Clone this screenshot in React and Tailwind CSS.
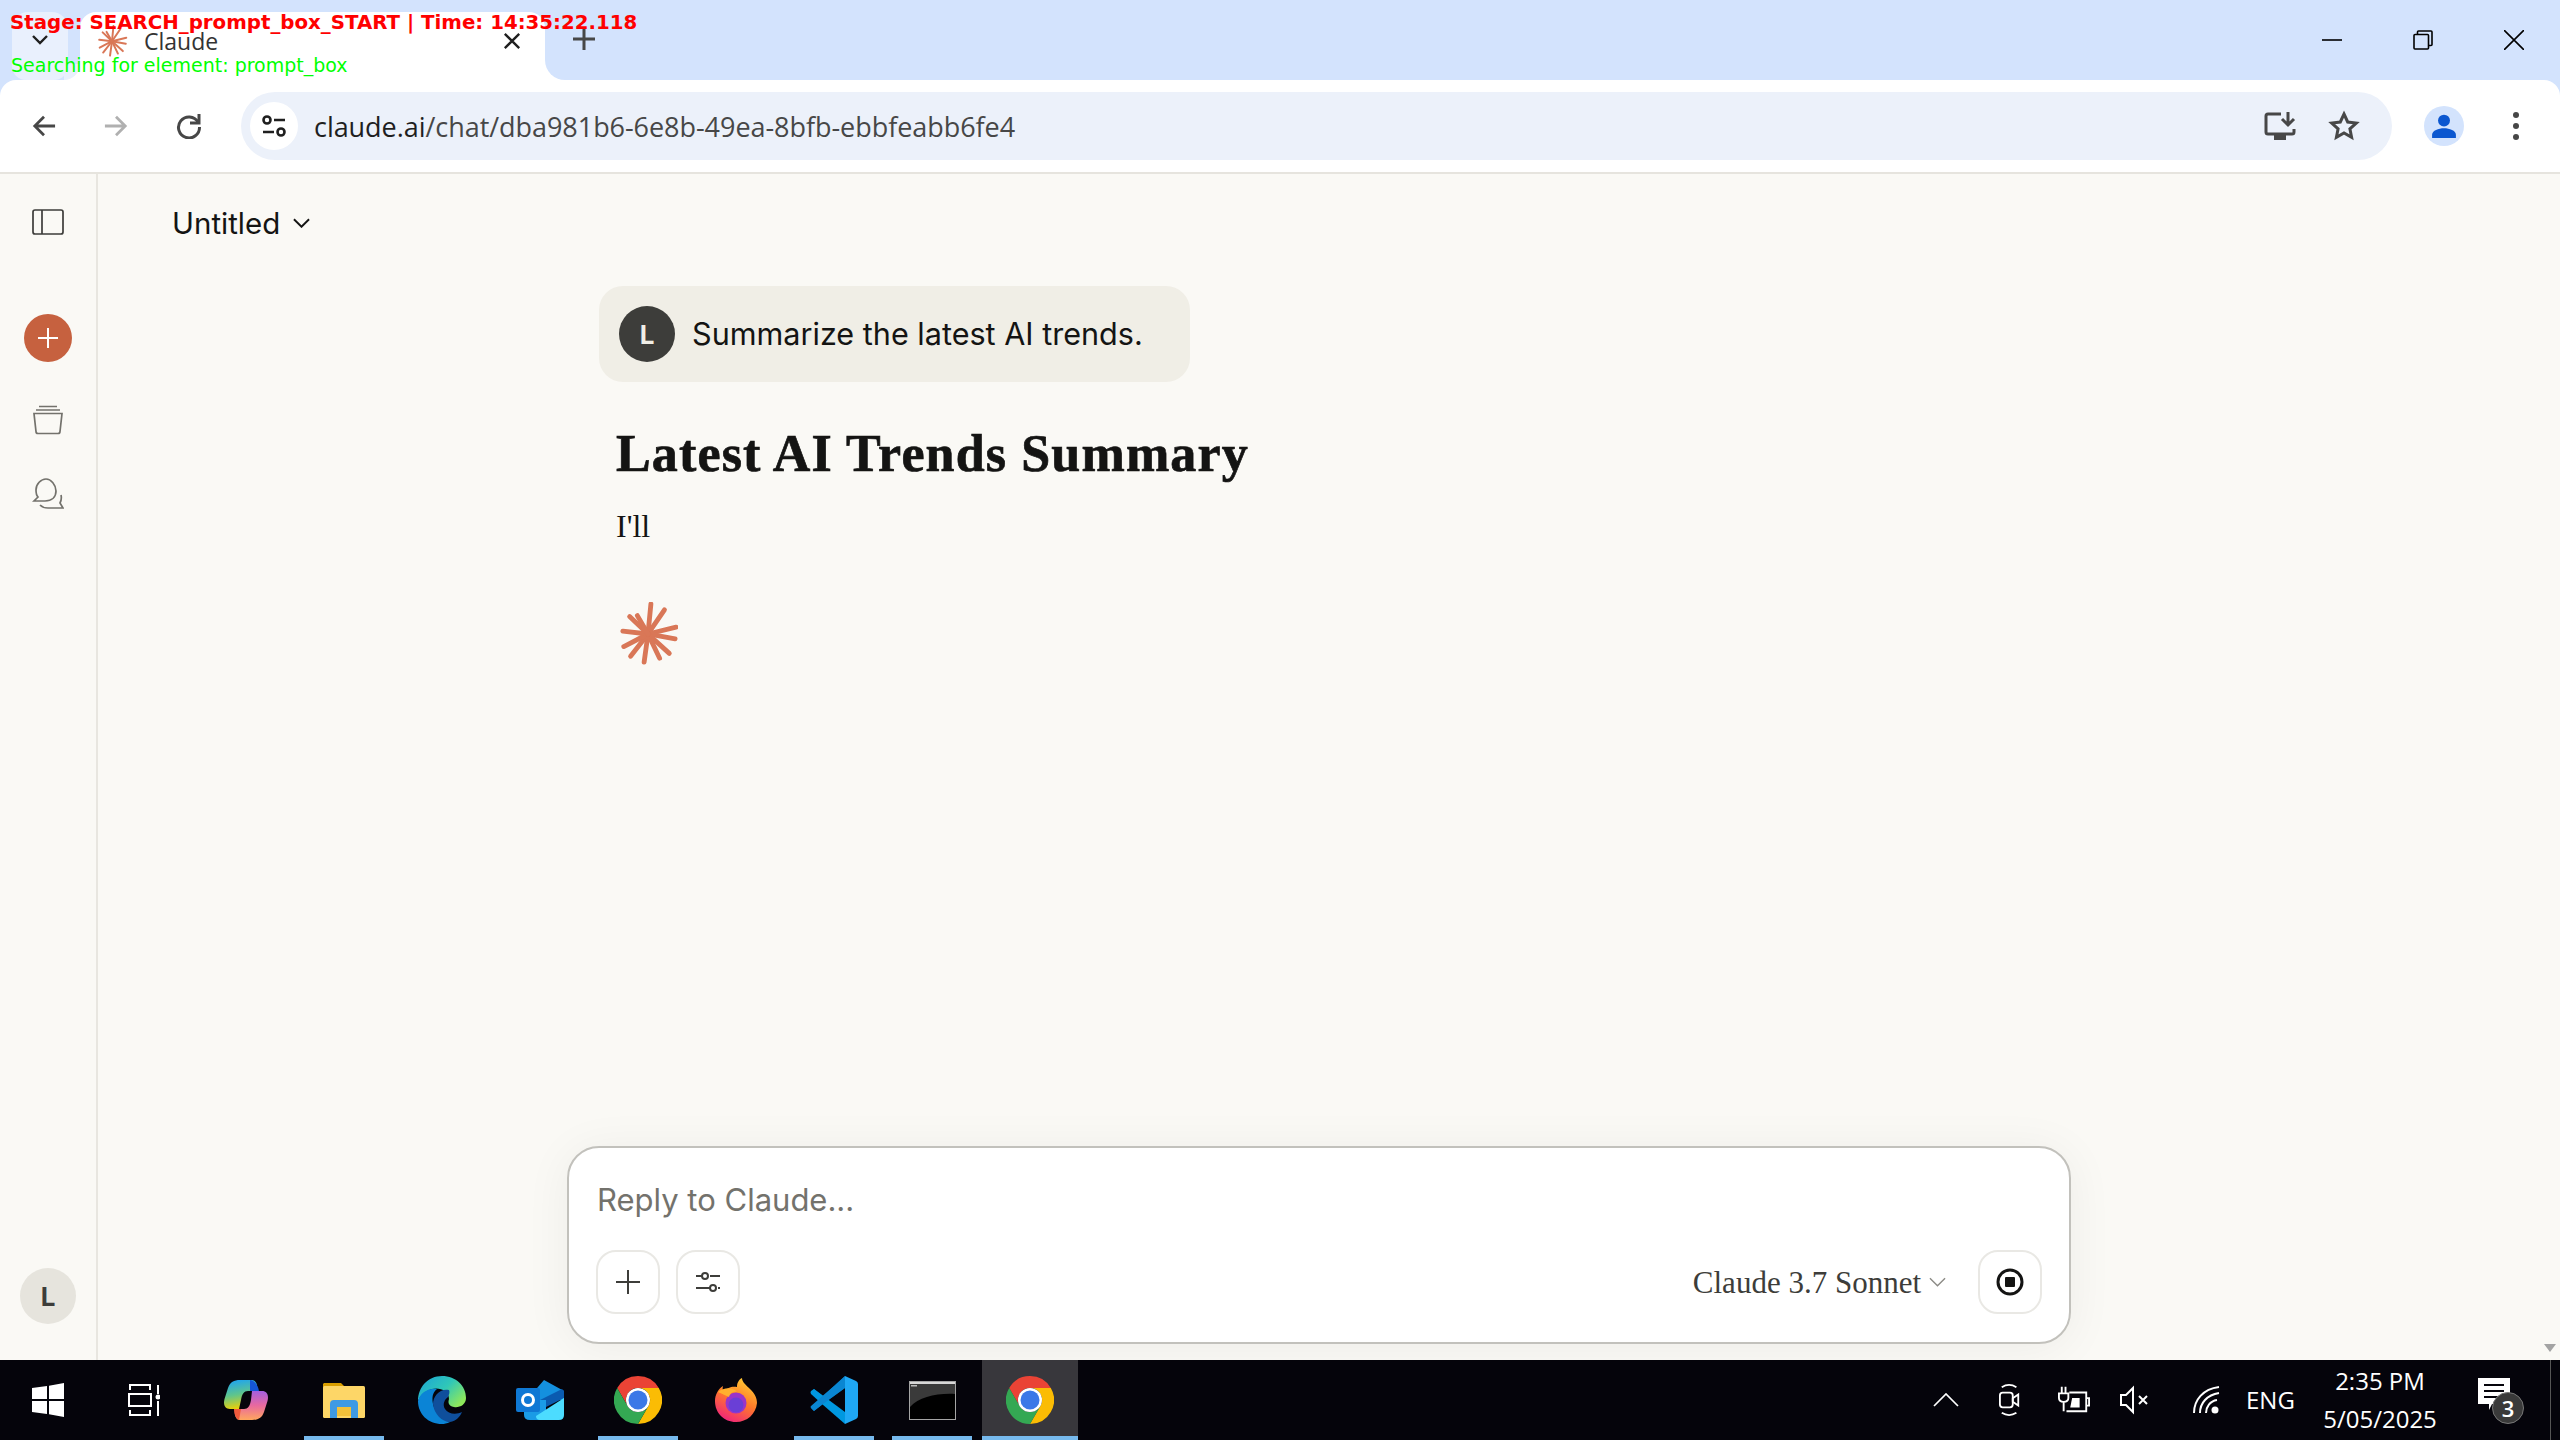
import React from "react";

const sans = "font-['Inter',sans-serif]";
const serif = "font-['Liberation_Serif',serif]";
const win = "font-['Open_Sans',sans-serif]";

// rays of the claude spark, measured off the screenshot
const rays = [
  [3, -31], [17, -25], [29, -7], [28, 5], [22, 20], [12, 25],
  [-4, 29], [-18, 23], [-25, 13], [-26, -3], [-19, -18], [-11, -19],
];

function Spark({ className, width = 5 }) {
  return (
    <svg viewBox="-31 -33 62 65" className={className}>
      <g stroke="#d97757" strokeWidth={width} strokeLinecap="round">
        {rays.map(([x, y], i) => (
          <line key={i} x1="0" y1="0" x2={x} y2={y} />
        ))}
      </g>
    </svg>
  );
}

function Chrome({ className }) {
  return (
    <svg viewBox="0 0 48 48" className={className}>
      <path fill="#ea4335" d="M24 0A24 24 0 0 1 44.8 12H24A12 12 0 0 0 13.6 30L3.2 12A24 24 0 0 1 24 0z" />
      <path fill="#fbbc04" d="M24 12H44.8A24 24 0 0 1 24 48L34.4 30A12 12 0 0 0 24 12z" />
      <path fill="#34a853" d="M3.2 12L13.6 30A12 12 0 0 0 34.4 30L24 48A24 24 0 0 1 3.2 12z" />
      <circle cx="24" cy="24" r="12" fill="#fff" />
      <circle cx="24" cy="24" r="9.5" fill="#3b78e7" />
    </svg>
  );
}

function Copilot({ className }) {
  return (
    <svg viewBox="0 0 44 40" className={className}>
      <defs>
        <linearGradient id="cpa" x1="0.3" y1="0" x2="0.5" y2="1">
          <stop offset="0" stopColor="#1fa4f0" />
          <stop offset="0.5" stopColor="#5fc58c" />
          <stop offset="1" stopColor="#f3d100" />
        </linearGradient>
        <linearGradient id="cpb" x1="0.5" y1="0" x2="0.5" y2="1">
          <stop offset="0" stopColor="#a45fe0" />
          <stop offset="0.5" stopColor="#e8699f" />
          <stop offset="1" stopColor="#ffa75e" />
        </linearGradient>
      </defs>
      <path fill="url(#cpa)" d="M16 0H28C32 0 34 5 33 11H24C20 11 18 14 17 20L15 29H6C1 29 -1 25 0.5 19L4 8C6 2 10 0 16 0z" />
      <path fill="#1556d6" d="M26 0C30 0 34 5 35 11H26z" />
      <path fill="url(#cpb)" d="M28 11H38C43 11 45 15 43.5 21L40 32C38 38 34 40 28 40H16C12 40 10 35 11 29H20C24 29 26 26 27 20z" />
      <path fill="#f05a3c" d="M10 29H17L15 40C12 39 10 34 10 29z" />
    </svg>
  );
}

function Explorer({ className }) {
  return (
    <svg viewBox="0 0 42 35" className={className}>
      <path fill="#d99e00" d="M1 0H18L22 4V10H0V1z" />
      <rect x="0" y="3" width="42" height="32" rx="1.5" fill="#fdd667" />
      <path fill="#3f9ae4" d="M7 35V21Q7 17 11 17H31Q35 17 35 21V35H28V24H14V35z" />
      <rect x="14" y="24" width="14" height="9" fill="#f3c13a" />
    </svg>
  );
}

function Edge({ className }) {
  return (
    <svg viewBox="0 0 48 48" className={className}>
      <defs>
        <linearGradient id="eda" x1="0" y1="0" x2="1" y2="0.7">
          <stop offset="0" stopColor="#1ba3d8" />
          <stop offset="0.55" stopColor="#2fc7b8" />
          <stop offset="1" stopColor="#8ee85b" />
        </linearGradient>
      </defs>
      <path fill="url(#eda)" d="M24 0C38 0 48 10 48 22C48 29 41 32 36 31C30 30 30 26 31 23C31 15 22 11 14 13C7 15 2 20 0 25C0 11 10 0 24 0z" />
      <path fill="#0b84d6" d="M0 25C2 17 10 12 19 13C14 17 14 22 15 28C17 37 24 44 32 46C29 47.5 26 48 24 48C10 48 0 38 0 25z" />
      <path fill="#0f4f9c" d="M31 14C22 12 15 20 15 28C16 38 24 46 32 46C38 45 42 41 44 36C38 39 30 38 27 33C24 28 27 23 30 21C31 19 32 16 31 14z" />
    </svg>
  );
}

function Outlook({ className }) {
  return (
    <svg viewBox="0 0 48 40" className={className}>
      <path fill="#1490df" d="M9 22L28 0L48 11V20H9z" />
      <path fill="#0a5bb0" d="M24 20L46 9L48 11V18L28 28z" />
      <path fill="#1a9be6" d="M8 20H30V40H14Q8 40 8 35z" />
      <path fill="#4cdcff" d="M20 36L48 18V35Q48 40 43 40H24Q20 40 20 36z" />
      <rect x="0" y="8" width="24" height="24" rx="2" fill="#0f78d4" />
      <circle cx="12" cy="20" r="5.5" fill="none" stroke="#fff" strokeWidth="3" />
    </svg>
  );
}

function Firefox({ className }) {
  return (
    <svg viewBox="0 0 42 44" className={className}>
      <defs>
        <linearGradient id="ffa" x1="0.8" y1="0" x2="0.3" y2="1">
          <stop offset="0" stopColor="#ffd233" />
          <stop offset="0.5" stopColor="#ff7a2a" />
          <stop offset="1" stopColor="#f0247a" />
        </linearGradient>
      </defs>
      <path fill="url(#ffa)" d="M21 44C9 44 0 35 0 23C0 17 3 11 8 8C7 11 8 13 9 14C12 9 18 8 22 9C22 6 23 2 27 0C27 4 31 7 35 11C40 16 42 20 42 25C41 36 32 44 21 44z" />
      <circle cx="21" cy="25" r="10.5" fill="#9a35c9" />
      <circle cx="21" cy="27" r="7.5" fill="#6a3fd6" />
      <path fill="#ffb02e" d="M3 14C9 9 18 9 22 14C17 13 15 16 14 19C10 17 7 16 3 14z" />
    </svg>
  );
}

function VSCode({ className }) {
  return (
    <svg viewBox="0 0 48 48" className={className}>
      <path fill="#0065a9" d="M1 16L4 13L13 20L35 0L35 12L13 28L4 35L1 32L9 24z" />
      <path fill="#0098e0" d="M4 13L35 36V48L12 28L1 18Q0 16 1 15z" />
      <path fill="#0a86d2" d="M35 0V12L13 28L4 35L1 32Q0 31 1 30L24 10z" />
      <path fill="#1fa8f5" d="M35 0L46 5Q48 6 48 8V40Q48 42 46 43L35 48z" />
    </svg>
  );
}

function Terminal({ className }) {
  return (
    <svg viewBox="0 0 47 39" className={className}>
      <rect x="0.5" y="0.5" width="46" height="38" fill="#000" stroke="#a5a5a5" />
      <rect x="1" y="1" width="45" height="2" fill="#d8d8d8" />
      <path fill="#3a3a3a" d="M1 3H46V13C28 12 10 16 1 26z" />
      <rect x="2" y="4" width="6" height="1.5" fill="#bbb" />
    </svg>
  );
}

const apps = [
  { icon: <Copilot className="w-[44px] h-[40px]" /> },
  { icon: <Explorer className="w-[42px] h-[35px]" />, open: true },
  { icon: <Edge className="w-[48px] h-[48px]" /> },
  { icon: <Outlook className="w-[48px] h-[40px]" /> },
  { icon: <Chrome className="w-[48px] h-[48px]" />, open: true },
  { icon: <Firefox className="w-[42px] h-[44px]" /> },
  { icon: <VSCode className="w-[48px] h-[48px]" />, open: true },
  { icon: <Terminal className="w-[47px] h-[39px]" />, open: true },
];

function TabStrip() {
  return (
    <div className="h-[80px] bg-[#d3e3fd] flex items-end pl-[12px]">
      <div className="w-[56px] h-[68px] pb-[12px] rounded-t-[16px] rounded-b-[14px] bg-[#e9f0fd] flex items-center justify-center">
        <svg viewBox="0 0 20 20" className="w-[20px] h-[20px]" fill="none" stroke="#1f1f1f" strokeWidth="2.4">
          <path d="M3 6l7 7 7-7" />
        </svg>
      </div>
      <div className={`relative ml-[12px] w-[465px] h-[68px] pb-[10px] bg-white rounded-t-[16px] flex items-center pl-[16px] ${win}`}>
        <div className="absolute -left-[16px] bottom-0 w-[16px] h-[16px] bg-white">
          <div className="w-full h-full bg-[#e9f0fd] rounded-br-[16px]" />
        </div>
        <div className="absolute -right-[20px] bottom-0 w-[20px] h-[20px] bg-white">
          <div className="w-full h-full bg-[#d3e3fd] rounded-bl-[20px]" />
        </div>
        <Spark className="w-[32px] h-[32px]" width={4} />
        <span className="ml-[16px] text-[23px] leading-none text-[#333]">Claude</span>
        <svg viewBox="0 0 20 20" className="w-[18px] h-[18px] ml-auto mr-[24px]" stroke="#1f1f1f" strokeWidth="2.6">
          <path d="M2 2l16 16M18 2L2 18" />
        </svg>
      </div>
      <div className="ml-[28px] mb-[30px]">
        <svg viewBox="0 0 22 22" className="w-[22px] h-[22px]" stroke="#474747" strokeWidth="3">
          <path d="M11 0v22M0 11h22" />
        </svg>
      </div>
      <div className="ml-auto h-[80px] flex items-center pr-[36px] gap-[71px]">
        <svg viewBox="0 0 20 20" className="w-[20px] h-[20px]" stroke="#000" strokeWidth="1.6"><path d="M0 10h20" /></svg>
        <svg viewBox="0 0 20 20" className="w-[20px] h-[20px]" fill="none" stroke="#000" strokeWidth="1.6">
          <rect x="1" y="4.5" width="14.5" height="14.5" rx="1" />
          <path d="M4.5 4.500V2q0-1 1-1H18q1 0 1 1v12.500q0 1-1 1h-2.500" />
        </svg>
        <svg viewBox="0 0 20 20" className="w-[20px] h-[20px]" stroke="#000" strokeWidth="1.6"><path d="M0 0l20 20M20 0L0 20" /></svg>
      </div>
    </div>
  );
}

function Toolbar() {
  return (
    <div className="h-[92px] bg-[#d3e3fd]">
      <div className="h-full bg-white rounded-t-[16px] flex items-center">
        <div className="w-[241px] shrink-0 flex items-center pl-[32px] gap-[48px]">
          <svg viewBox="0 0 26 26" className="w-[24px] h-[24px]" fill="none" stroke="#474747" strokeWidth="3"><path d="M25 13H3M13 3L3 13l10 10" /></svg>
          <svg viewBox="0 0 26 26" className="w-[24px] h-[24px]" fill="none" stroke="#b0b0b0" strokeWidth="3"><path d="M1 13h22M13 3l10 10-10 10" /></svg>
          <svg viewBox="0 0 26 26" className="w-[26px] h-[26px]" fill="none" stroke="#474747" strokeWidth="3">
            <path d="M22 9A10.500 10.500 0 1 0 23.500 14" />
            <path d="M23 1v9h-9" />
          </svg>
        </div>
        <div className="w-[2151px] h-[68px] bg-[#ecf1fa] rounded-full flex items-center pl-[9px] pr-[32px]">
          <div className="w-[48px] h-[48px] rounded-full bg-white flex items-center justify-center">
            <svg viewBox="0 0 26 26" className="w-[26px] h-[26px]" fill="none" stroke="#1f1f1f" strokeWidth="2.600">
              <circle cx="6" cy="7" r="3.500" />
              <path d="M13 7h11M2 19h11" />
              <circle cx="20" cy="19" r="3.500" />
            </svg>
          </div>
          <div className={`ml-[16px] text-[27px] tracking-[-0.05px] leading-none ${win}`}>
            <span className="text-[#1f1f1f]">claude.ai</span>
            <span className="text-[#474747]">/chat/dba981b6-6e8b-49ea-8bfb-ebbfeabb6fe4</span>
          </div>
          <svg viewBox="0 0 32 28" className="ml-auto w-[32px] h-[28px]" fill="none" stroke="#474747" strokeWidth="3">
            <path d="M17 2H4Q2 2 2 4V20Q2 22 4 22H28Q30 22 30 20V17" />
            <path d="M24 0v11M18 7l6 6 6-6" />
            <path d="M10 25.500H22" strokeWidth="5" />
          </svg>
          <svg viewBox="0 0 32 32" className="ml-[32px] w-[32px] h-[32px]" fill="none" stroke="#474747" strokeWidth="3">
            <path d="M16 4l3.700 8 8.600 1-6.400 5.800 1.700 8.500-7.600-4.300-7.600 4.300 1.700-8.500L3.700 13l8.600-1z" />
          </svg>
        </div>
        <div className="ml-[32px] w-[40px] h-[40px] rounded-full bg-[#d3e3fd] flex items-center justify-center">
          <svg viewBox="0 0 24 24" className="w-[26px] h-[26px]" fill="#0b57d0">
            <circle cx="12" cy="7" r="5.500" />
            <path d="M1 23v-3c0-4 6-6 11-6s11 2 11 6v3z" />
          </svg>
        </div>
        <div className="ml-[49px] flex flex-col gap-[5px]">
          <div className="w-[6px] h-[6px] rounded-full bg-[#474747]" />
          <div className="w-[6px] h-[6px] rounded-full bg-[#474747]" />
          <div className="w-[6px] h-[6px] rounded-full bg-[#474747]" />
        </div>
      </div>
    </div>
  );
}

function Sidebar() {
  return (
    <div className="w-[98px] shrink-0 border-r-2 border-[#e8e6e0] flex flex-col items-center pt-[35px] pb-[36px]">
      <svg viewBox="0 0 32 26" className="w-[32px] h-[26px]" fill="none" stroke="#3d3d3a" strokeWidth="1.700">
        <rect x="1" y="1" width="30" height="24" rx="2" />
        <path d="M10 1v24" />
      </svg>
      <div className="mt-[79px] w-[48px] h-[48px] rounded-full bg-[#c6613f] flex items-center justify-center">
        <svg viewBox="0 0 20 20" className="w-[20px] h-[20px]" stroke="#fff" strokeWidth="2"><path d="M10 0v20M0 10h20" /></svg>
      </div>
      <svg viewBox="0 0 30 30" className="mt-[43px] w-[30px] h-[30px]" fill="none" stroke="#73726c" strokeWidth="1.700">
        <path d="M6 1.500h18M3 5h24" />
        <path d="M1 8.500h28l-2 18q0 2-2 2H5q-2 0-2-2z" />
      </svg>
      <svg viewBox="0 0 32 32" className="mt-[43px] w-[32px] h-[32px]" fill="none" stroke="#73726c" strokeWidth="1.700">
        <path d="M2 23h11c7 0 11-4 11-10S19 1 14 1 4 6 4 12c0 4 1 6 2 7z" />
        <path d="M8 27c2 2 5 3 8 3h15l-3-5c1-2 2-4 1-8" />
      </svg>
      <div className="mt-auto w-[56px] h-[56px] rounded-full bg-[#e6e4dd] flex items-center justify-center">
        <span className={`text-[26px] font-bold text-[#3d3d3a] ${sans}`}>L</span>
      </div>
    </div>
  );
}

function IconButton({ children }) {
  return (
    <div className="w-[64px] h-[64px] rounded-[20px] border-2 border-[#e9e8e4] flex items-center justify-center">
      {children}
    </div>
  );
}

function Composer() {
  return (
    <div className="ml-[469px] mb-[16px] w-[1504px] h-[198px] rounded-[32px] bg-white border-2 border-[#c2c1bc] shadow-[0_4px_48px_rgba(0,0,0,0.055)] flex flex-col px-[27px] pb-[28px]">
      <div className={`pl-[1px] pt-[34px] text-[31px] leading-[36px] text-[#73726c] ${sans}`}>Reply to Claude...</div>
      <div className="mt-auto flex items-center gap-[16px]">
        <IconButton>
          <svg viewBox="0 0 24 24" className="w-[24px] h-[24px]" stroke="#3d3d3a" strokeWidth="2"><path d="M12 0v24M0 12h24" /></svg>
        </IconButton>
        <IconButton>
          <svg viewBox="0 0 24 20" className="w-[24px] h-[20px]" fill="none" stroke="#3d3d3a" strokeWidth="2">
            <path d="M0 4h6M14 4h10M0 16h14M22 16h2" />
            <circle cx="9" cy="4" r="3" />
            <circle cx="17" cy="16" r="3" />
          </svg>
        </IconButton>
        <div className={`ml-auto text-[31px] leading-none text-[#3d3d3a] ${serif}`}>Claude 3.7 Sonnet</div>
        <svg viewBox="0 0 18 10" className="w-[17px] h-[10px] -ml-[8px] mr-[16px]" fill="none" stroke="#8c8b86" strokeWidth="1.500"><path d="M1 1l8 8 8-8" /></svg>
        <IconButton>
          <svg viewBox="0 0 28 28" className="w-[28px] h-[28px]">
            <circle cx="14" cy="14" r="12" fill="none" stroke="#141413" strokeWidth="3" />
            <rect x="9" y="9" width="10" height="10" rx="1" fill="#141413" />
          </svg>
        </IconButton>
      </div>
    </div>
  );
}

function Chat() {
  return (
    <div className="flex-1 min-w-0 relative flex flex-col bg-[#faf9f5]">
      <div className="h-[112px] pl-[74px] pt-[31px] flex items-start">
        <div className={`flex items-center text-[29.5px] leading-[36px] text-[#141413] ${sans}`}>
          Untitled
          <svg viewBox="0 0 18 10" className="ml-[13px] w-[17px] h-[10px]" fill="none" stroke="#141413" strokeWidth="2"><path d="M1 1l8 8 8-8" /></svg>
        </div>
      </div>
      <div className="pl-[501px]">
        <div className="w-[591px] h-[96px] rounded-[24px] bg-[#f0eee6] flex items-center pl-[20px]">
          <div className="w-[56px] h-[56px] rounded-full bg-[#3d3d3a] flex items-center justify-center">
            <span className={`text-[26px] font-bold text-[#f0eee6] ${sans}`}>L</span>
          </div>
          <span className={`ml-[17px] text-[30.6px] leading-none text-[#141413] ${sans}`}>Summarize the latest AI trends.</span>
        </div>
      </div>
      <div className={`pl-[518px] mt-[42px] text-[52px] leading-[60px] tracking-[1.15px] font-bold [-webkit-text-stroke:0.7px_#141413] text-[#141413] ${serif}`}>Latest AI Trends Summary</div>
      <div className={`pl-[518px] mt-[22px] text-[32px] leading-[40px] text-[#141413] ${serif}`}>I&apos;ll</div>
      <div className="pl-[520px] mt-[56px]">
        <Spark className="w-[60px] h-[63px]" />
      </div>
      <div className="mt-auto">
        <Composer />
      </div>
      <svg viewBox="0 0 12 8" className="absolute right-[4px] bottom-[8px] w-[12px] h-[8px]" fill="#a3a3a3"><path d="M0 0h12L6 8z" /></svg>
    </div>
  );
}

function Taskbar() {
  return (
    <div className={`h-[80px] bg-[#05040b] flex items-center text-white relative ${win}`}>
      <div className="w-[96px] h-full flex items-center justify-center">
        <svg viewBox="0 0 32 34" className="w-[32px] h-[34px]" fill="#fff">
          <path d="M0 5l15-2v13H0zM17 2.700L32 0v16H17zM0 18h15v13L0 29zM17 18h15v16l-15-2.700z" />
        </svg>
      </div>
      <div className="w-[96px] mr-[5px] h-full flex items-center justify-center">
        <svg viewBox="0 0 32 32" className="w-[32px] h-[32px]" fill="none" stroke="#fff" strokeWidth="2">
          <path d="M2 6v-5h20v5M2 26v5h20v-5" />
          <rect x="1" y="10" width="22" height="12" />
          <path d="M30 1v9M30 17v15" />
          <circle cx="30" cy="13" r="2.500" fill="#fff" stroke="none" />
        </svg>
      </div>
      {apps.map((app, i) => (
        <div key={i} className="relative w-[98px] h-full flex items-center justify-center">
          {app.icon}
          {app.open && <div className="absolute bottom-0 left-[9px] w-[80px] h-[4px] bg-[#76b9ed]" />}
        </div>
      ))}
      <div className="relative ml-[1px] w-[96px] h-full bg-[#38373c] flex items-center justify-center">
        <Chrome className="w-[48px] h-[48px]" />
        <div className="absolute bottom-0 left-0 w-full h-[4px] bg-[#76b9ed]" />
      </div>

      <div className="ml-auto h-full flex items-center">
        <svg viewBox="0 0 26 14" className="w-[26px] h-[14px]" fill="none" stroke="#fff" strokeWidth="1.700"><path d="M1 13L13 1l12 12" /></svg>
        <svg viewBox="0 0 24 40" className="ml-[40px] w-[22px] h-[38px]" fill="none" stroke="#fff" strokeWidth="2">
          <path d="M3 6q8-5 16 0M3 34q8 5 16 0" />
          <rect x="1" y="12" width="14" height="16" rx="3" />
          <path d="M15 18l6-4v12l-6-4z" />
        </svg>
        <svg viewBox="0 0 34 28" className="ml-[37px] w-[32px] h-[28px]" fill="none" stroke="#fff" strokeWidth="2">
          <path d="M4 0v7M8 0v7M1 7h10v5q0 4-5 4-5 0-5-4zM6 16v10" />
          <path d="M12 6h18v20H9M30 12h3v8h-3" />
          <path d="M15 12h8v10h-10z" fill="#fff" stroke="none" />
        </svg>
        <svg viewBox="0 0 30 30" className="ml-[30px] w-[30px] h-[30px]" fill="none" stroke="#fff" strokeWidth="2">
          <path d="M1 10h5l7-7v24l-7-7H1z" />
          <path d="M19 11l8 8M27 11l-8 8" />
        </svg>
        <svg viewBox="0 0 28 28" className="ml-[43px] w-[28px] h-[28px]" fill="none" stroke="#fff" strokeWidth="2">
          <path d="M1 27C1 14 10 3 26 1M7 27C7 17 14 9 26 7M13 27c0-6 4-12 11-13" />
          <circle cx="22" cy="24" r="3.500" fill="#fff" stroke="none" />
        </svg>
        <div className="ml-[25px] text-[24px] leading-none w-[46px]">ENG</div>
        <div className="ml-[34px] w-[108px] flex flex-col items-center text-[24px] leading-[38px]">
          <div>2:35 PM</div>
          <div>5/05/2025</div>
        </div>
        <div className="relative ml-[44px] mr-[50px] w-[32px] h-[34px] -mt-[10px]">
          <svg viewBox="0 0 32 34" className="w-[32px] h-[34px]">
            <path fill="#fff" d="M0 0h32v26H14l-3 6v-6H0z" />
            <path d="M6 7h20M6 13h20M6 19h14" stroke="#05040b" strokeWidth="2" />
          </svg>
          <div className="absolute left-[14px] top-[14px] w-[32px] h-[32px] rounded-full bg-[#3a3a3a] border border-[#777] flex items-center justify-center text-[22px] font-semibold leading-none">3</div>
        </div>
      </div>
      <div className="absolute right-[9px] top-0 h-full w-[1px] bg-[#555]" />
    </div>
  );
}

export default function App() {
  return (
    <div className="relative w-[2560px] h-[1440px] overflow-hidden flex flex-col">
      <TabStrip />
      <Toolbar />
      <div className="h-[2px] bg-[#e6e4de]" />
      <div className="flex-1 min-h-0 flex bg-[#faf9f5]">
        <Sidebar />
        <Chat />
      </div>
      <Taskbar />
      <div className="absolute left-[10px] top-[10px] text-[19.8px] leading-[26px] font-bold text-[#ff0000] font-['DejaVu_Sans',sans-serif] whitespace-nowrap">
        Stage: SEARCH_prompt_box_START | Time: 14:35:22.118
      </div>
      <div className="absolute left-[11px] top-[53px] text-[19px] leading-[24px] text-[#00ff00] font-['DejaVu_Sans',sans-serif] whitespace-nowrap">
        Searching for element: prompt_box
      </div>
    </div>
  );
}
